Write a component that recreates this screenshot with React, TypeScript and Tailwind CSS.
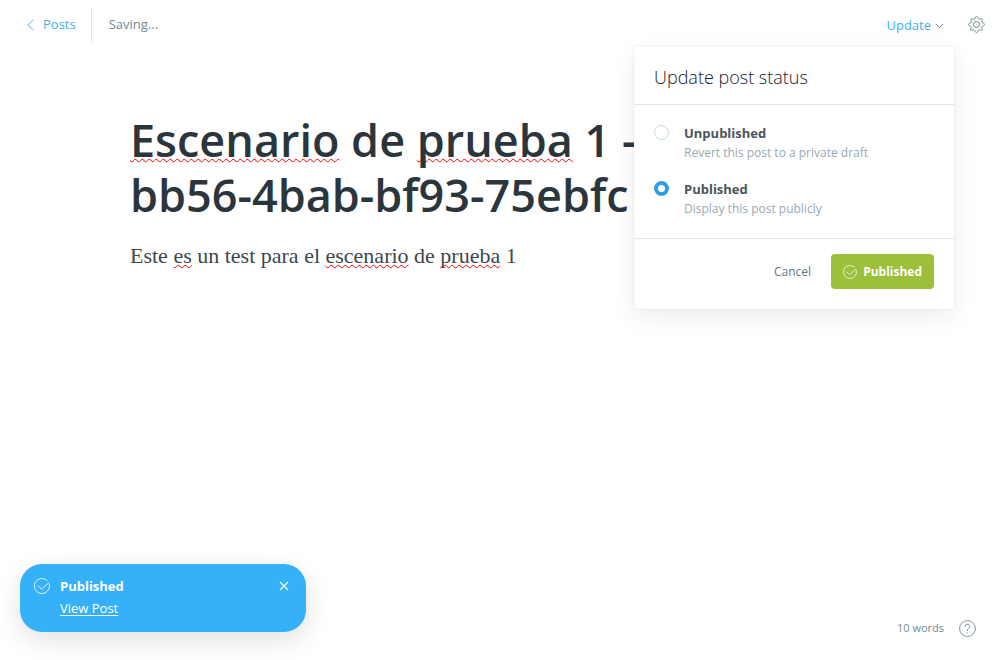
import { useState } from "react";

const sans = "font-['Open_Sans','Noto_Sans',sans-serif]";

function CheckCircle({ className }: { className?: string }) {
  return (
    <svg viewBox="0 0 24 24" fill="none" stroke="currentColor" strokeWidth="1.3" strokeLinecap="round" strokeLinejoin="round" className={className} aria-hidden="true">
      <path d="M23.1 10A11.3 11.3 0 1 1 19.6 3.6" />
      <path d="M6.4 11.8l4.8 4.9L22.4 7.2" />
    </svg>
  );
}

function GearIcon() {
  return (
    <svg viewBox="0 0 24 24" fill="none" stroke="currentColor" strokeWidth="1.4" strokeLinejoin="round" className="size-[17px]" aria-hidden="true">
      <circle cx="12" cy="12" r="4.3" />
      <path d="M13.7 1.9l.6 1.5a2 2 0 0 0 2.6 1.1l1.6-.7a1.3 1.3 0 0 1 1.7 1.7l-.7 1.6a2 2 0 0 0 1.1 2.6l1.5.6a1.8 1.8 0 0 1 0 3.4l-1.5.6a2 2 0 0 0-1.1 2.6l.7 1.6a1.3 1.3 0 0 1-1.7 1.7l-1.6-.7a2 2 0 0 0-2.6 1.1l-.6 1.5a1.8 1.8 0 0 1-3.4 0l-.6-1.5a2 2 0 0 0-2.6-1.1l-1.6.7a1.3 1.3 0 0 1-1.7-1.7l.7-1.6a2 2 0 0 0-1.1-2.6l-1.5-.6a1.8 1.8 0 0 1 0-3.4l1.5-.6a2 2 0 0 0 1.1-2.6l-.7-1.6a1.3 1.3 0 0 1 1.7-1.7l1.6.7a2 2 0 0 0 2.6-1.1l.6-1.5a1.8 1.8 0 0 1 3.4 0z" />
    </svg>
  );
}

function Misspelled({ children }: { children: string }) {
  return (
    <span className="underline decoration-[#ff0000] decoration-wavy decoration-1 underline-offset-1 [text-decoration-skip-ink:none]">
      {children}
    </span>
  );
}

const options = [
  { id: "unpublished", title: "Unpublished", note: "Revert this post to a private draft" },
  { id: "published", title: "Published", note: "Display this post publicly" },
];

function StatusPopover() {
  const [status, setStatus] = useState("published");
  return (
    <section className="absolute top-[46px] right-[46px] w-80 rounded bg-white shadow-[0_0_0_1px_rgba(99,114,130,0.08),0_8px_24px_rgba(27,39,51,0.08)]">
      <header className="border-b border-[#dfe9f1] px-5 pt-[19px] pb-[15px]">
        <h2 className="text-lg leading-6 font-light text-[#15212a]">Update post status</h2>
      </header>
      <div className="flex flex-col gap-4 border-b border-[#dfe9f1] px-5 pt-[18px] pb-[19px]">
        {options.map((o) => (
          <div key={o.id} className="flex gap-[15px]">
            <input
              type="radio"
              id={o.id}
              name="status"
              checked={status === o.id}
              onChange={() => setStatus(o.id)}
              className="mt-[2px] size-[15px] shrink-0 appearance-none rounded-full border border-[#c3d9e8] bg-white checked:border-4 checked:border-[#2f9fe3]"
            />
            <label htmlFor={o.id} className="text-[13px] leading-5">
              <span className="block font-bold text-[#4a555c]">{o.title}</span>
              <span className="block text-xs leading-5 text-[#98a9b2]">{o.note}</span>
            </label>
          </div>
        ))}
      </div>
      <footer className="flex items-center justify-end gap-5 px-5 pt-[15px] pb-5">
        <button type="button" className="text-xs text-[#627884]">Cancel</button>
        <button type="button" className="flex h-[35px] items-center gap-[6px] rounded bg-[#9cc03a] px-3 text-xs font-bold text-white">
          <CheckCircle className="size-[14px]" />
          Published
        </button>
      </footer>
    </section>
  );
}

export default function App() {
  return (
    <div className={`relative flex min-h-screen flex-col bg-white ${sans}`}>
      <header className="flex h-[50px] items-center justify-between pr-[15px] pl-[26px] text-[13px]">
        <div className="flex items-center">
          <a href="#posts" className="flex items-center gap-2 text-[#3eb0ef]">
            <svg viewBox="0 0 9 14" fill="none" stroke="currentColor" strokeWidth="1" className="h-3 w-[9px]" aria-hidden="true">
              <path d="M8 1L1.5 7L8 13" />
            </svg>
            Posts
          </a>
          <span className="ml-[15px] flex h-[35px] items-center border-l border-[#dfe9f1] pl-[17px] text-[#738a94]">Saving...</span>
        </div>
        <div className="flex items-center gap-6">
          <button type="button" className="flex items-center gap-1 pt-[2px] text-[#3eb0ef]">
            Update
            <svg viewBox="0 0 10 6" fill="none" stroke="#738a94" strokeWidth="1.1" className="h-[6px] w-[9px]" aria-hidden="true">
              <path d="M.8 .6L5 5L9.2 .6" />
            </svg>
          </button>
          <button type="button" aria-label="Settings" className="pb-[2px] text-[#738a94]">
            <GearIcon />
          </button>
        </div>
      </header>

      <main className="mx-auto w-full max-w-[740px] grow pt-[62px]">
        <h1 className="text-[45px] leading-[55px] font-semibold text-[#2b363c]">
          <Misspelled>Escenario</Misspelled> de <Misspelled>prueba</Misspelled> 1 -<br />
          bb56-4bab-bf93-75ebfc
        </h1>
        <p className="mt-[18px] font-['Liberation_Serif',serif] text-[22px] leading-8 text-[#3c484f]">
          Este <Misspelled>es</Misspelled> un test para el <Misspelled>escenario</Misspelled> de <Misspelled>prueba</Misspelled> 1
        </p>
      </main>

      <footer className="flex items-end justify-between pr-6 pb-[23px] pl-5">
        <aside className="mb-[5px] flex h-[68px] w-[286px] items-start rounded-[22px] bg-[#35b1f9] pt-3 pr-[17px] pl-[14px] text-white shadow-[0_8px_26px_rgba(0,0,0,0.12)]">
          <CheckCircle className="mt-[2px] size-4" />
          <div className="ml-[10px] grow text-[13px] leading-[22px]">
            <p className="-mt-px font-bold">Published</p>
            <a href="#post" className="block underline underline-offset-2">View Post</a>
          </div>
          <button type="button" aria-label="Close" className="mt-[5px]">
            <svg viewBox="0 0 10 10" stroke="currentColor" strokeWidth="1.1" className="size-[10px]" aria-hidden="true">
              <path d="M1 1L9 9M9 1L1 9" />
            </svg>
          </button>
        </aside>
        <div className="flex items-center gap-[15px] text-[#738a94]">
          <span className="text-[11px]">10 words</span>
          <button type="button" aria-label="Help">
            <svg viewBox="0 0 24 24" fill="none" stroke="currentColor" strokeWidth="1.3" strokeLinecap="round" className="size-[17px]" aria-hidden="true">
              <circle cx="12" cy="12" r="11.2" />
              <path d="M8.8 9.2a3.2 3.2 0 1 1 4.5 2.9c-.8.4-1.3 1-1.3 1.9v1" />
              <path d="M12 18v.4" />
            </svg>
          </button>
        </div>
      </footer>

      <StatusPopover />
    </div>
  );
}
